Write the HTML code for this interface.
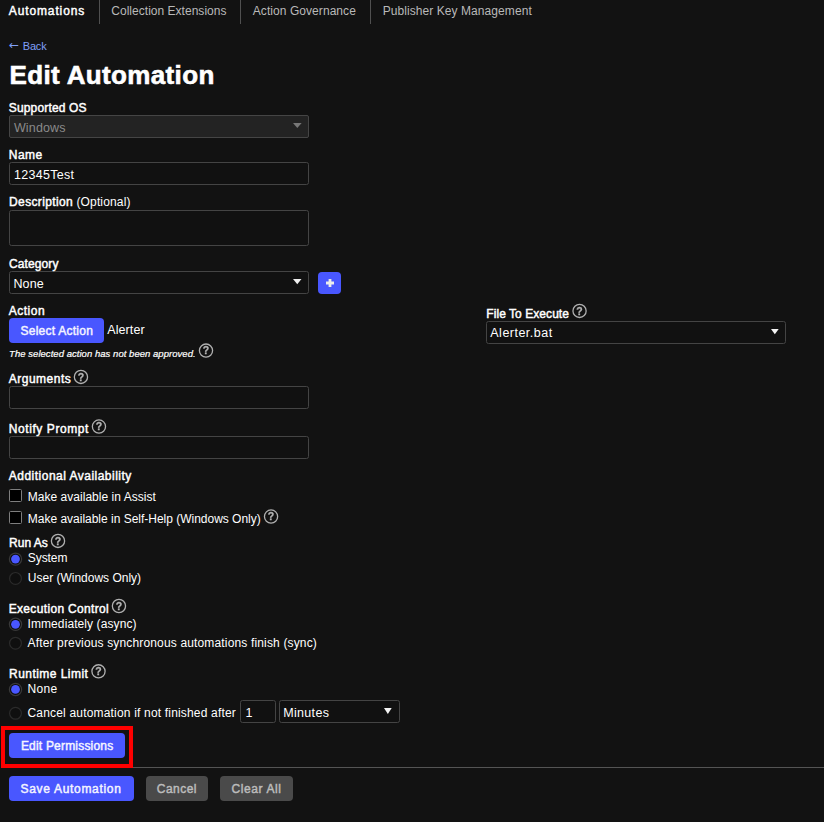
<!DOCTYPE html>
<html><head><meta charset="utf-8"><title>Edit Automation</title>
<style>
html,body{margin:0;padding:0;background:#121212;}
body{width:824px;height:822px;position:relative;overflow:hidden;font-family:'Liberation Sans', sans-serif;}
.t{position:absolute;white-space:pre;}
.bx{position:absolute;box-sizing:border-box;}
.hi{position:absolute;overflow:visible;}
svg.q{will-change:transform;}
.sep{position:absolute;top:0;width:1px;height:24px;background:#505050;}
</style></head><body>
<div class="sep" style="left:99px"></div>
<div class="sep" style="left:240px"></div>
<div class="sep" style="left:370px"></div>
<div class="bx" style="left:9px;top:115px;width:300px;height:23px;border:1px solid #454545;background:#232323;border-radius:2px;"></div>
<svg class="hi" style="left:292.7px;top:123.2px" width="8.6" height="5.0" viewBox="0 0 8.6 5.0"><polygon points="0,0 8.6,0 4.3,5.0" fill="#787878"/></svg>
<div class="bx" style="left:9px;top:162px;width:300px;height:23px;border:1px solid #444444;background:#111111;border-radius:2.5px;"></div>
<div class="bx" style="left:9px;top:210px;width:300px;height:36px;border:1px solid #444444;background:#111111;border-radius:2.5px;"></div>
<div class="bx" style="left:9px;top:271px;width:300px;height:23px;border:1px solid #444444;background:#111111;border-radius:2.5px;"></div>
<svg class="hi" style="left:292.7px;top:279px" width="8.5" height="5.2" viewBox="0 0 8.5 5.2"><polygon points="0,0 8.5,0 4.25,5.2" fill="#f0f0f0"/></svg>
<div class="bx" style="left:318px;top:272px;width:23px;height:22px;background:#4957ff;border-radius:4px;"></div>
<svg class="hi" style="left:326.1px;top:279.3px" width="8" height="8" viewBox="0 0 8 8"><path d="M2.6 0h2.8v2.6H8v2.8H5.4V8H2.6V5.4H0V2.6h2.6z" fill="#ececec"/></svg>
<div class="bx" style="left:9px;top:318px;width:95px;height:25px;background:#4957ff;border-radius:4px;"></div>
<div class="bx" style="left:9px;top:386px;width:300px;height:23px;border:1px solid #444444;background:#111111;border-radius:2.5px;"></div>
<div class="bx" style="left:9px;top:436px;width:300px;height:23px;border:1px solid #444444;background:#111111;border-radius:2.5px;"></div>
<div class="bx" style="left:486px;top:321px;width:300px;height:23px;border:1px solid #444444;background:#111111;border-radius:2.5px;"></div>
<svg class="hi" style="left:770.7px;top:329px" width="7.7" height="5.2" viewBox="0 0 7.7 5.2"><polygon points="0,0 7.7,0 3.85,5.2" fill="#f4f4f4"/></svg>
<div class="bx" style="left:9px;top:489px;width:13px;height:13px;border:1px solid #7e7e7e;background:#000;border-radius:1.5px;"></div>
<div class="bx" style="left:9px;top:511px;width:13px;height:13px;border:1px solid #7e7e7e;background:#000;border-radius:1.5px;"></div>
<svg class="hi" style="left:7px;top:551px" width="17" height="17" viewBox="0 0 17 17"><circle cx="8.50" cy="8.10" r="6.1" fill="#0c0c0c" stroke="#393939" stroke-width="1.25"/><circle cx="8.50" cy="8.10" r="4.4" fill="#4957ff"/></svg>
<svg class="hi" style="left:7px;top:570px" width="17" height="17" viewBox="0 0 17 17"><circle cx="8.50" cy="8.40" r="5.9" fill="#0f0f0f" stroke="#2b2b2b" stroke-width="1.2"/></svg>
<svg class="hi" style="left:7px;top:616px" width="17" height="17" viewBox="0 0 17 17"><circle cx="8.50" cy="8.30" r="6.1" fill="#0c0c0c" stroke="#393939" stroke-width="1.25"/><circle cx="8.50" cy="8.30" r="4.4" fill="#4957ff"/></svg>
<svg class="hi" style="left:7px;top:635px" width="17" height="17" viewBox="0 0 17 17"><circle cx="8.50" cy="8.20" r="5.9" fill="#0f0f0f" stroke="#2b2b2b" stroke-width="1.2"/></svg>
<svg class="hi" style="left:7px;top:681px" width="17" height="17" viewBox="0 0 17 17"><circle cx="8.50" cy="8.40" r="6.1" fill="#0c0c0c" stroke="#393939" stroke-width="1.25"/><circle cx="8.50" cy="8.40" r="4.4" fill="#4957ff"/></svg>
<svg class="hi" style="left:7px;top:705px" width="17" height="17" viewBox="0 0 17 17"><circle cx="8.50" cy="8.30" r="5.9" fill="#0f0f0f" stroke="#2b2b2b" stroke-width="1.2"/></svg>
<div class="bx" style="left:240px;top:700px;width:36px;height:23px;border:1px solid #444444;background:#111111;border-radius:2.5px;"></div>
<div class="bx" style="left:279px;top:700px;width:121px;height:23px;border:1px solid #444444;background:#111111;border-radius:2.5px;"></div>
<svg class="hi" style="left:383.6px;top:708.2px" width="7.7" height="6.1" viewBox="0 0 7.7 6.1"><polygon points="0,0 7.7,0 3.85,6.1" fill="#f4f4f4"/></svg>
<div style="position:absolute;left:133px;top:767px;width:691px;height:1px;background:#545454"></div>
<div class="bx" style="left:1px;top:726px;width:132px;height:42px;border:4px solid #ff0000;background:#121212;"></div>
<div class="bx" style="left:9px;top:733px;width:116px;height:25px;background:#4957ff;border-radius:4px;"></div>
<div class="bx" style="left:9px;top:776px;width:125px;height:25px;background:#4957ff;border-radius:4px;"></div>
<div class="bx" style="left:146px;top:776px;width:62px;height:25px;background:#4a4a4a;border-radius:4px;"></div>
<div class="bx" style="left:220px;top:776px;width:73px;height:25px;background:#4a4a4a;border-radius:4px;"></div>
<span class="t" style="left:8.80px;top:3px;font:normal 400 12px/16px 'Liberation Sans', sans-serif;letter-spacing:0.872px;color:#ffffff;-webkit-text-stroke:0.45px #fff;">Automations</span>
<span class="t" style="left:111.30px;top:3px;font:normal 400 12px/16px 'Liberation Sans', sans-serif;letter-spacing:0.022px;color:#b9b9b9;">Collection Extensions</span>
<span class="t" style="left:252.80px;top:3px;font:normal 400 12px/16px 'Liberation Sans', sans-serif;letter-spacing:0.061px;color:#b9b9b9;">Action Governance</span>
<span class="t" style="left:382.70px;top:3px;font:normal 400 12px/16px 'Liberation Sans', sans-serif;letter-spacing:0.070px;color:#b9b9b9;">Publisher Key Management</span>
<span class="t" style="left:9.10px;top:37px;font:normal 400 12px/16px 'DejaVu Sans', sans-serif;letter-spacing:0.000px;color:#7f9ff7;">←</span>
<span class="t" style="left:22.80px;top:39px;font:normal 400 11px/14px 'Liberation Sans', sans-serif;letter-spacing:-0.192px;color:#7f9ff7;">Back</span>
<span class="t" style="left:9.50px;top:59px;font:normal 700 26px/32px 'Liberation Sans', sans-serif;letter-spacing:0.360px;color:#ffffff;-webkit-text-stroke:0.6px #fff;">Edit Automation</span>
<span class="t" style="left:8.80px;top:100px;font:normal 400 12px/16px 'Liberation Sans', sans-serif;letter-spacing:0.153px;color:#ffffff;-webkit-text-stroke:0.45px #fff;">Supported OS</span>
<span class="t" style="left:13.90px;top:120px;font:normal 400 12.5px/16px 'Liberation Sans', sans-serif;letter-spacing:0.154px;color:#8a8a8a;">Windows</span>
<span class="t" style="left:8.80px;top:147px;font:normal 400 12px/16px 'Liberation Sans', sans-serif;letter-spacing:0.421px;color:#ffffff;-webkit-text-stroke:0.45px #fff;">Name</span>
<span class="t" style="left:13.90px;top:167px;font:normal 400 12.5px/16px 'Liberation Sans', sans-serif;letter-spacing:0.301px;color:#ffffff;">12345Test</span>
<span class="t" style="left:9.10px;top:194px;font:normal 400 12px/16px 'Liberation Sans', sans-serif;letter-spacing:0.352px;color:#ffffff;-webkit-text-stroke:0.45px #fff;">Description</span>
<span class="t" style="left:76.40px;top:194px;font:normal 400 12px/16px 'Liberation Sans', sans-serif;letter-spacing:0.161px;color:#ffffff;">(Optional)</span>
<span class="t" style="left:9.10px;top:256px;font:normal 400 12px/16px 'Liberation Sans', sans-serif;letter-spacing:0.087px;color:#ffffff;-webkit-text-stroke:0.45px #fff;">Category</span>
<span class="t" style="left:13.50px;top:276px;font:normal 400 12.5px/16px 'Liberation Sans', sans-serif;letter-spacing:0.077px;color:#ffffff;">None</span>
<span class="t" style="left:8.80px;top:303px;font:normal 400 12px/16px 'Liberation Sans', sans-serif;letter-spacing:0.490px;color:#ffffff;-webkit-text-stroke:0.45px #fff;">Action</span>
<span class="t" style="left:20.50px;top:323px;font:normal 400 12px/16px 'Liberation Sans', sans-serif;letter-spacing:0.248px;color:#f4f4ff;-webkit-text-stroke:0.45px #f4f4ff;">Select Action</span>
<span class="t" style="left:107.30px;top:322px;font:normal 400 12.5px/16px 'Liberation Sans', sans-serif;letter-spacing:0.082px;color:#ffffff;">Alerter</span>
<span class="t" style="left:9.10px;top:347px;font:italic 400 9.5px/13px 'Liberation Sans', sans-serif;letter-spacing:0.041px;color:#ffffff;-webkit-text-stroke:0.2px #fff;">The selected action has not been approved.</span>
<span class="t" style="left:8.80px;top:371px;font:normal 400 12px/16px 'Liberation Sans', sans-serif;letter-spacing:0.485px;color:#ffffff;-webkit-text-stroke:0.45px #fff;">Arguments</span>
<span class="t" style="left:8.80px;top:421px;font:normal 400 12px/16px 'Liberation Sans', sans-serif;letter-spacing:0.578px;color:#ffffff;-webkit-text-stroke:0.45px #fff;">Notify Prompt</span>
<span class="t" style="left:8.80px;top:468px;font:normal 400 12px/16px 'Liberation Sans', sans-serif;letter-spacing:0.484px;color:#ffffff;-webkit-text-stroke:0.45px #fff;">Additional Availability</span>
<span class="t" style="left:27.80px;top:489px;font:normal 400 12px/16px 'Liberation Sans', sans-serif;letter-spacing:0.025px;color:#ffffff;">Make available in Assist</span>
<span class="t" style="left:27.80px;top:511px;font:normal 400 12px/16px 'Liberation Sans', sans-serif;letter-spacing:-0.012px;color:#ffffff;">Make available in Self-Help (Windows Only)</span>
<span class="t" style="left:9.10px;top:535px;font:normal 400 12px/16px 'Liberation Sans', sans-serif;letter-spacing:0.016px;color:#ffffff;-webkit-text-stroke:0.45px #fff;">Run As</span>
<span class="t" style="left:27.80px;top:550px;font:normal 400 12px/16px 'Liberation Sans', sans-serif;letter-spacing:-0.086px;color:#ffffff;">System</span>
<span class="t" style="left:27.80px;top:570px;font:normal 400 12px/16px 'Liberation Sans', sans-serif;letter-spacing:-0.003px;color:#ffffff;">User (Windows Only)</span>
<span class="t" style="left:8.70px;top:601px;font:normal 400 12px/16px 'Liberation Sans', sans-serif;letter-spacing:0.334px;color:#ffffff;-webkit-text-stroke:0.45px #fff;">Execution Control</span>
<span class="t" style="left:27.50px;top:616px;font:normal 400 12px/16px 'Liberation Sans', sans-serif;letter-spacing:0.091px;color:#ffffff;">Immediately (async)</span>
<span class="t" style="left:27.50px;top:635px;font:normal 400 12px/16px 'Liberation Sans', sans-serif;letter-spacing:0.154px;color:#ffffff;">After previous synchronous automations finish (sync)</span>
<span class="t" style="left:9.10px;top:666px;font:normal 400 12px/16px 'Liberation Sans', sans-serif;letter-spacing:0.449px;color:#ffffff;-webkit-text-stroke:0.45px #fff;">Runtime Limit</span>
<span class="t" style="left:27.50px;top:681px;font:normal 400 12px/16px 'Liberation Sans', sans-serif;letter-spacing:0.328px;color:#ffffff;">None</span>
<span class="t" style="left:27.50px;top:705px;font:normal 400 12px/16px 'Liberation Sans', sans-serif;letter-spacing:0.181px;color:#ffffff;">Cancel automation if not finished after</span>
<span class="t" style="left:245.50px;top:705px;font:normal 400 12.5px/16px 'Liberation Sans', sans-serif;letter-spacing:0.000px;color:#ffffff;">1</span>
<span class="t" style="left:283.30px;top:705px;font:normal 400 12.5px/16px 'Liberation Sans', sans-serif;letter-spacing:0.303px;color:#ffffff;">Minutes</span>
<span class="t" style="left:20.90px;top:738px;font:normal 400 12px/16px 'Liberation Sans', sans-serif;letter-spacing:0.195px;color:#f4f4ff;-webkit-text-stroke:0.45px #f4f4ff;">Edit Permissions</span>
<span class="t" style="left:20.50px;top:781px;font:normal 400 12px/16px 'Liberation Sans', sans-serif;letter-spacing:0.691px;color:#f4f4ff;-webkit-text-stroke:0.45px #f4f4ff;">Save Automation</span>
<span class="t" style="left:156.80px;top:781px;font:normal 400 12px/16px 'Liberation Sans', sans-serif;letter-spacing:0.457px;color:#bcbcbc;-webkit-text-stroke:0.45px #bcbcbc;">Cancel</span>
<span class="t" style="left:231.60px;top:781px;font:normal 400 12px/16px 'Liberation Sans', sans-serif;letter-spacing:0.579px;color:#bcbcbc;-webkit-text-stroke:0.45px #bcbcbc;">Clear All</span>
<span class="t" style="left:486.30px;top:306px;font:normal 400 12px/16px 'Liberation Sans', sans-serif;letter-spacing:0.058px;color:#ffffff;-webkit-text-stroke:0.45px #fff;">File To Execute</span>
<span class="t" style="left:490.30px;top:325px;font:normal 400 12.5px/16px 'Liberation Sans', sans-serif;letter-spacing:0.483px;color:#ffffff;">Alerter.bat</span>
<svg class="hi q" style="left:198px;top:342px" width="18" height="18" viewBox="0 0 18 18"><circle cx="8.00" cy="8.60" r="6.6" fill="none" stroke="#b0b0b0" stroke-width="1.3"/><text x="8.00" y="12.20" text-anchor="middle" font-family="Liberation Sans, sans-serif" font-weight="700" font-size="10.5" fill="#b4b4b4" stroke="#b4b4b4" stroke-width="0.3">?</text></svg>
<svg class="hi q" style="left:72px;top:368px" width="18" height="18" viewBox="0 0 18 18"><circle cx="8.95" cy="8.90" r="6.6" fill="none" stroke="#b0b0b0" stroke-width="1.3"/><text x="8.95" y="12.50" text-anchor="middle" font-family="Liberation Sans, sans-serif" font-weight="700" font-size="10.5" fill="#b4b4b4" stroke="#b4b4b4" stroke-width="0.3">?</text></svg>
<svg class="hi q" style="left:90px;top:418px" width="18" height="18" viewBox="0 0 18 18"><circle cx="8.95" cy="8.55" r="6.6" fill="none" stroke="#b0b0b0" stroke-width="1.3"/><text x="8.95" y="12.15" text-anchor="middle" font-family="Liberation Sans, sans-serif" font-weight="700" font-size="10.5" fill="#b4b4b4" stroke="#b4b4b4" stroke-width="0.3">?</text></svg>
<svg class="hi q" style="left:263px;top:508px" width="18" height="18" viewBox="0 0 18 18"><circle cx="8.05" cy="8.55" r="6.6" fill="none" stroke="#b0b0b0" stroke-width="1.3"/><text x="8.05" y="12.15" text-anchor="middle" font-family="Liberation Sans, sans-serif" font-weight="700" font-size="10.5" fill="#b4b4b4" stroke="#b4b4b4" stroke-width="0.3">?</text></svg>
<svg class="hi q" style="left:50px;top:532px" width="18" height="18" viewBox="0 0 18 18"><circle cx="8.00" cy="8.90" r="6.6" fill="none" stroke="#b0b0b0" stroke-width="1.3"/><text x="8.00" y="12.50" text-anchor="middle" font-family="Liberation Sans, sans-serif" font-weight="700" font-size="10.5" fill="#b4b4b4" stroke="#b4b4b4" stroke-width="0.3">?</text></svg>
<svg class="hi q" style="left:110px;top:598px" width="18" height="18" viewBox="0 0 18 18"><circle cx="8.95" cy="8.00" r="6.6" fill="none" stroke="#b0b0b0" stroke-width="1.3"/><text x="8.95" y="11.60" text-anchor="middle" font-family="Liberation Sans, sans-serif" font-weight="700" font-size="10.5" fill="#b4b4b4" stroke="#b4b4b4" stroke-width="0.3">?</text></svg>
<svg class="hi q" style="left:90px;top:663px" width="18" height="18" viewBox="0 0 18 18"><circle cx="8.50" cy="8.35" r="6.6" fill="none" stroke="#b0b0b0" stroke-width="1.3"/><text x="8.50" y="11.95" text-anchor="middle" font-family="Liberation Sans, sans-serif" font-weight="700" font-size="10.5" fill="#b4b4b4" stroke="#b4b4b4" stroke-width="0.3">?</text></svg>
<svg class="hi q" style="left:571px;top:302px" width="18" height="18" viewBox="0 0 18 18"><circle cx="8.55" cy="8.90" r="6.6" fill="none" stroke="#b0b0b0" stroke-width="1.3"/><text x="8.55" y="12.50" text-anchor="middle" font-family="Liberation Sans, sans-serif" font-weight="700" font-size="10.5" fill="#b4b4b4" stroke="#b4b4b4" stroke-width="0.3">?</text></svg>
</body></html>
